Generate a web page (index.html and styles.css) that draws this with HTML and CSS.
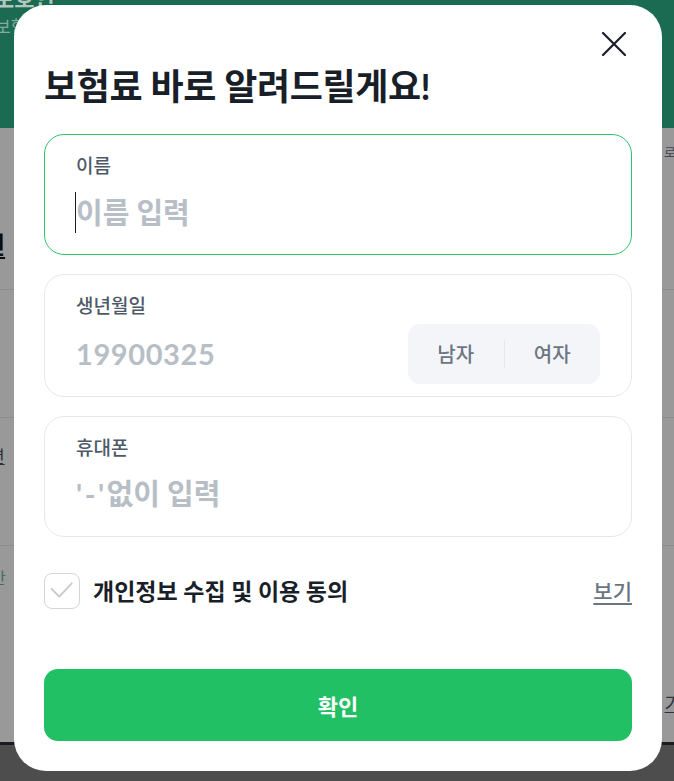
FILE: index.html
```html
<!DOCTYPE html>
<html lang="ko">
<head>
<meta charset="utf-8">
<title>보험료 바로 알려드릴게요</title>
<link rel="stylesheet" href="styles.css">
</head>
<body>
<div class="bg">
  <div class="bg-header">
    <div class="bg-title">보호인</div>
    <div class="bg-sub">보험</div>
  </div>
  <div class="bg-main">
    <div class="bg-row bg-row1">
      <div class="bg-right-small">로분</div>
      <div class="bg-left-big">년</div>
    </div>
    <div class="bg-row bg-row2"></div>
    <div class="bg-row bg-row3">
      <div class="bg-left-mid">년</div>
    </div>
    <div class="bg-row bg-row4">
      <div class="bg-left-green">안</div>
      <div class="bg-right-link">가</div>
    </div>
  </div>
  <div class="bg-bottom"></div>
</div>

<div class="modal">
  <div class="modal-head">
    <button class="close" type="button" aria-label="닫기">
      <svg width="24" height="24" viewBox="0 0 24 24"><path d="M1 1L23 23M23 1L1 23" stroke="#191f28" stroke-width="2.2" stroke-linecap="round" fill="none"/></svg>
    </button>
  </div>
  <h1 class="title">보험료 바로 알려드릴게요!</h1>

  <div class="field field-active">
    <div class="label">이름</div>
    <div class="value"><span class="caret"></span>이름 입력</div>
  </div>

  <div class="field field-birth">
    <div class="label">생년월일</div>
    <div class="birth-row">
      <div class="value"><span class="digits">19900325</span></div>
      <div class="gender">
        <span class="g-btn">남자</span>
        <span class="g-div"></span>
        <span class="g-btn">여자</span>
      </div>
    </div>
  </div>

  <div class="field">
    <div class="label">휴대폰</div>
    <div class="value"><span class="punct">'-'</span>없이 입력</div>
  </div>

  <div class="agree">
    <div class="check">
      <svg width="34" height="34" viewBox="0 0 34 34"><polyline points="6.7,15 14.3,22.7 26.7,9.3" fill="none" stroke="#c5cad0" stroke-width="1.8" stroke-linecap="round" stroke-linejoin="round"/></svg>
    </div>
    <div class="agree-text">개인정보 수집 및 이용 동의</div>
    <a class="view" href="#">보기</a>
  </div>

  <button class="submit" type="button">확인</button>
</div>
</body>
</html>
```

FILE: styles.css
```css
* { box-sizing: border-box; }

html, body {
  margin: 0;
  padding: 0;
}

body {
  width: 674px;
  height: 781px;
  overflow: hidden;
  position: relative;
  background: #999999;
  font-family: Lato, "Noto Sans CJK KR", sans-serif;
}

/* ---------- dimmed background page ---------- */
.bg {
  height: 781px;
  display: flex;
  flex-direction: column;
  overflow: hidden;
}

.bg-header {
  height: 128px;
  flex: none;
  background: #1a6b52;
  overflow: hidden;
}

.bg-title {
  margin-top: -14px;
  margin-left: -6px;
  font-size: 22px;
  line-height: 26px;
  font-weight: 700;
  color: #b3c7be;
  white-space: nowrap;
}

.bg-sub {
  margin-top: 4px;
  margin-left: -5px;
  font-size: 17px;
  line-height: 22px;
  color: #86aa9c;
  white-space: nowrap;
}

.bg-main {
  flex: 1;
  display: flex;
  flex-direction: column;
}

.bg-row {
  border-bottom: 1px solid #8b8b8b;
  display: flex;
  flex-direction: column;
}

.bg-row1 { height: 162px; padding-top: 16px; }
.bg-row2 { height: 128px; }
.bg-row3 { height: 128px; padding-top: 28px; }
.bg-row4 { flex: 1; border-bottom: none; padding-top: 22px; }

.bg-right-small {
  align-self: flex-end;
  margin-right: -14px;
  font-size: 13px;
  line-height: 16px;
  color: #3f4652;
  white-space: nowrap;
}

.bg-left-big {
  margin-top: 70px;
  margin-left: -17px;
  font-size: 24px;
  line-height: 30px;
  font-weight: 700;
  color: #0e0e12;
  text-decoration: underline;
  text-underline-offset: 3px;
  white-space: nowrap;
}

.bg-left-mid {
  margin-left: -11px;
  font-size: 17px;
  line-height: 22px;
  color: #2b2f36;
  text-decoration: underline;
  white-space: nowrap;
}

.bg-left-green {
  margin-left: -9px;
  font-size: 16px;
  line-height: 20px;
  color: #3d6d58;
  white-space: nowrap;
}

.bg-right-link {
  align-self: flex-end;
  margin-right: -8px;
  margin-top: 104px;
  font-size: 19px;
  line-height: 24px;
  color: #2f343c;
  text-decoration: underline;
  white-space: nowrap;
}

.bg-bottom {
  height: 39px;
  flex: none;
  background: #4d4d4d;
  border-top: 3px solid #1b1b22;
}

/* ---------- modal ---------- */
.modal {
  position: absolute;
  left: 14px;
  top: 5px;
  width: 648px;
  height: 766px;
  background: #ffffff;
  border-radius: 32px;
  padding: 0 30px 30px;
  display: flex;
  flex-direction: column;
}

.modal-head {
  height: 61px;
  padding-top: 21px;
  display: flex;
  justify-content: flex-end;
  align-items: flex-start;
}

.close {
  width: 36px;
  height: 36px;
  padding: 0;
  border: none;
  background: none;
  display: flex;
  align-items: center;
  justify-content: center;
  cursor: pointer;
}

.title {
  margin: 0;
  font-size: 36px;
  line-height: 40px;
  font-weight: 700;
  color: #191f28;
  letter-spacing: -0.4px;
  white-space: nowrap;
}

.field {
  margin-top: 19px;
  height: 121px;
  border: 1px solid #e5e8eb;
  border-radius: 20px;
  padding: 19px 31px 0;
}

.field-active {
  margin-top: 28px;
  border-color: #2cc46c;
}

.field-birth {
  height: 123px;
}

.label {
  font-size: 19px;
  line-height: 24px;
  font-weight: 500;
  color: #4e5968;
}

.value {
  margin-top: 14px;
  font-size: 29px;
  line-height: 40px;
  font-weight: 700;
  color: #b7bec6;
  white-space: nowrap;
  display: flex;
  align-items: center;
}

.caret {
  width: 1px;
  height: 41px;
  background: #191f28;
  margin-left: -1px;
}

.digits {
  letter-spacing: 0.6px;
}

.punct {
  letter-spacing: 2.5px;
}

.birth-row {
  margin-top: 6px;
  display: flex;
  align-items: center;
  justify-content: space-between;
}

.birth-row .value {
  margin-top: 0;
}

.gender {
  width: 192px;
  height: 60px;
  background: #f4f5f9;
  border-radius: 12px;
  display: flex;
  align-items: center;
}

.g-btn {
  flex: 1;
  text-align: center;
  font-size: 20px;
  line-height: 24px;
  font-weight: 500;
  color: #6b7684;
}

.g-div {
  width: 1px;
  height: 28px;
  background: #e3e6ea;
}

.agree {
  margin-top: 36px;
  height: 36px;
  display: flex;
  align-items: center;
}

.check {
  width: 36px;
  height: 36px;
  border: 1px solid #d1d6db;
  border-radius: 8px;
  flex: none;
}

.check svg {
  display: block;
}

.agree-text {
  margin-left: 13px;
  flex: 1;
  font-size: 23px;
  line-height: 28px;
  font-weight: 700;
  color: #191f28;
  white-space: nowrap;
}

.view {
  font-size: 21px;
  line-height: 26px;
  font-weight: 500;
  color: #6b7684;
  text-decoration: underline;
  text-underline-offset: 4px;
}

.submit {
  margin-top: 60px;
  height: 72px;
  width: 100%;
  border: none;
  border-radius: 14px;
  background: #22c064;
  color: #ffffff;
  font-family: Lato, "Noto Sans CJK KR", sans-serif;
  font-size: 22px;
  font-weight: 700;
  cursor: pointer;
}
```
